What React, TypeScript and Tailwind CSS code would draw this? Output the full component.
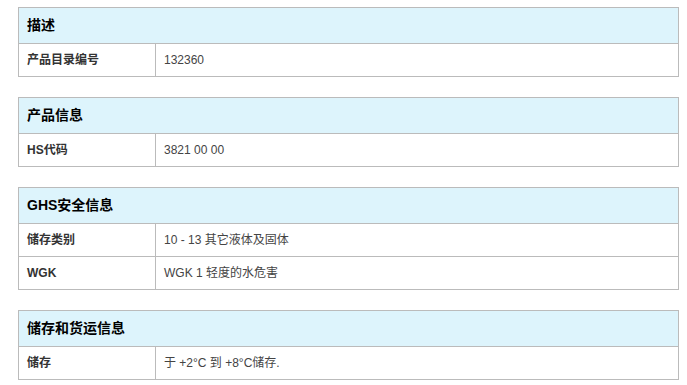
const sections: { title: string; rows: [string, string][] }[] = [
  { title: '描述', rows: [['产品目录编号', '132360']] },
  { title: '产品信息', rows: [['HS代码', '3821 00 00']] },
  {
    title: 'GHS安全信息',
    rows: [
      ['储存类别', '10 - 13 其它液体及固体'],
      ['WGK', 'WGK 1 轻度的水危害'],
    ],
  },
  { title: '储存和货运信息', rows: [['储存', '于 +2°C 到 +8°C储存.']] },
]

function InfoTable({ title, rows }: { title: string; rows: [string, string][] }) {
  return (
    <div className="w-[661px] border border-[#bbbbbb]">
      <div className="flex h-[36px] items-center border-b border-[#bbbbbb] bg-[#ddf4fc] px-[8px] text-[14px] font-bold text-black">
        {title}
      </div>
      {rows.map(([label, value], i) => (
        <div
          key={label}
          className={
            i < rows.length - 1
              ? 'flex h-[33px] border-b border-[#bbbbbb] text-[12px]'
              : 'flex h-[32px] text-[12px]'
          }
        >
          <div className="flex w-[137px] items-center border-r border-[#bbbbbb] px-[8px] font-bold text-[#333333]">
            {label}
          </div>
          <div className="flex flex-1 items-center px-[8px] text-[#444444]">{value}</div>
        </div>
      ))}
    </div>
  )
}

export default function App() {
  return (
    <div
      className="flex min-h-screen w-full flex-col gap-[20px] bg-white pl-[18px] pt-[7px]"
      style={{ fontFamily: '"Liberation Sans", Arial, "Noto Sans CJK SC", sans-serif' }}
    >
      {sections.map((s) => (
        <InfoTable key={s.title} title={s.title} rows={s.rows} />
      ))}
    </div>
  )
}
